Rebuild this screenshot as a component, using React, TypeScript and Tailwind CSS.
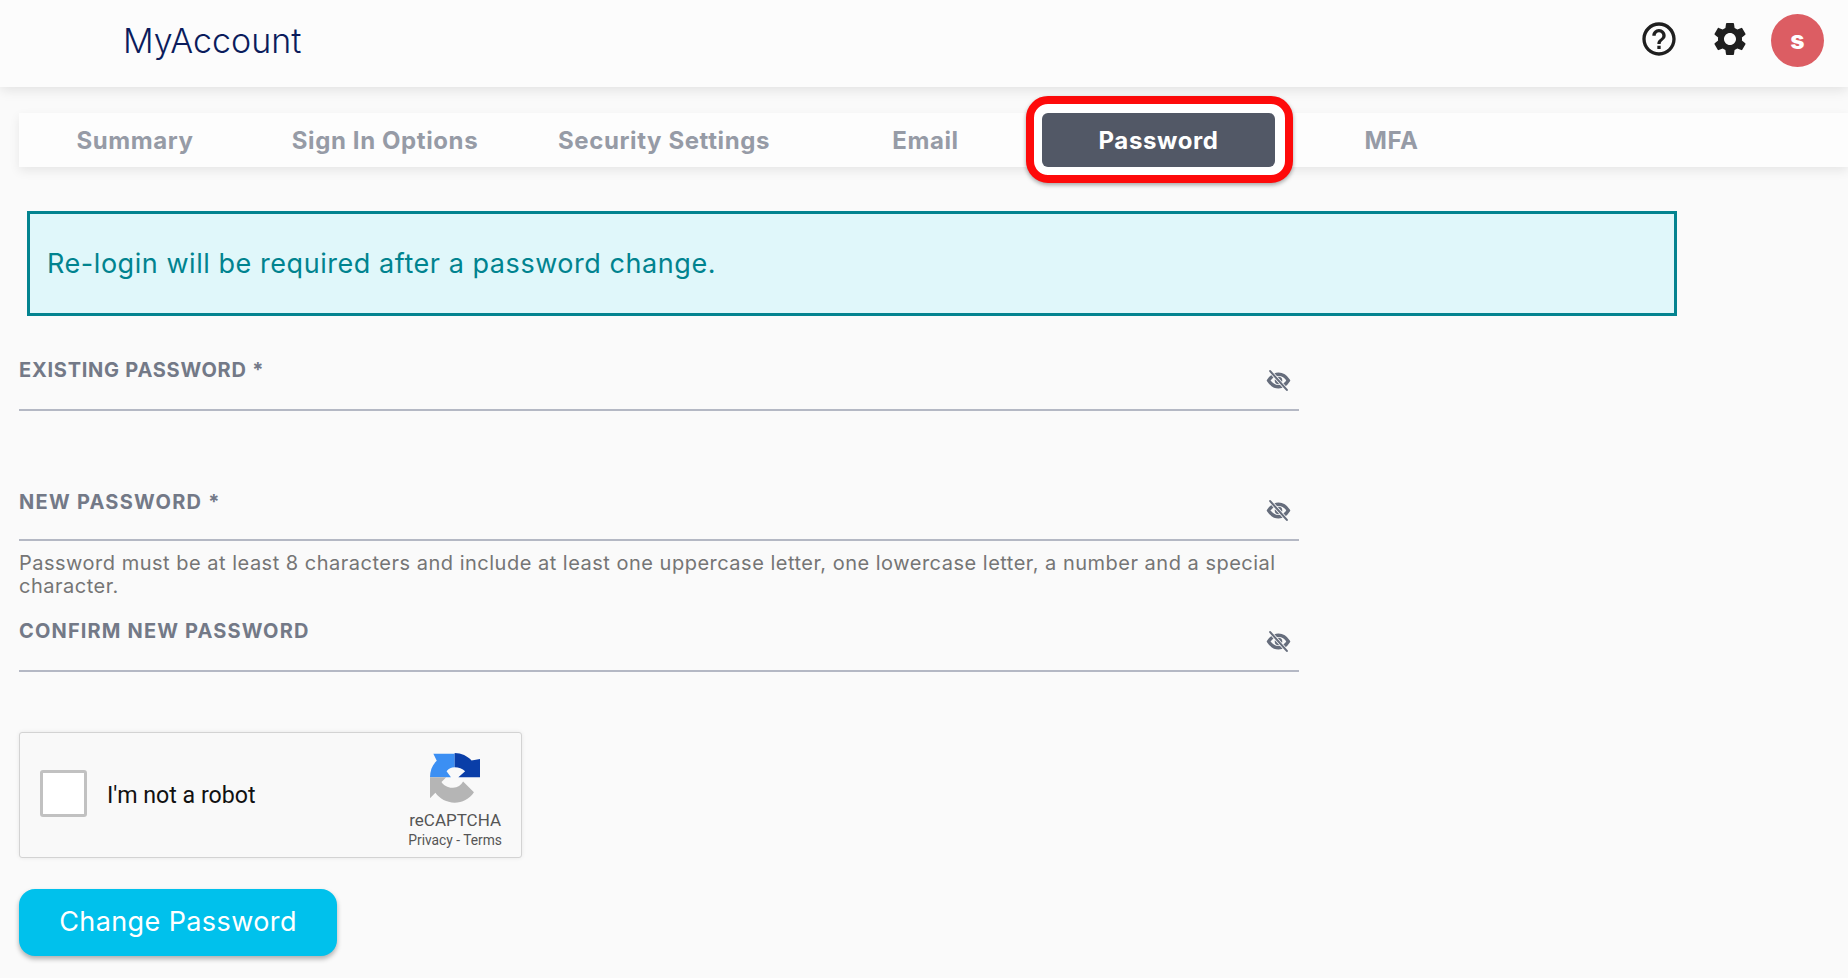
import React from "react";
import { MdHelpOutline, MdSettings } from "react-icons/md";

const tabs = [
  { label: "Summary", width: "w-[232px]" },
  { label: "Sign In Options", width: "w-[268px]" },
  { label: "Security Settings", width: "w-[290px]" },
  { label: "Email", width: "w-[233px]" },
  { label: "Password", width: "w-[233px]", active: true },
  { label: "MFA", width: "w-[233px]" },
];

const RecaptchaLogo: React.FC = () => (
  <svg viewBox="92 8 148 148" className="h-[50px] w-[50px]">
    <path fill="#3b8ff3" d="M165 8V50C155 50 147 54 141 62L154 80H92C92 60 99 43 112 31L102 10H165Z" />
    <path fill="#0a3ea8" d="M165 8C185 8 203 17 215 30L240 26V80H176L196 62C188 54 177 50 165 50Z" />
    <path fill="#b5b5b5" d="M92 80H140L126 94C132 104 146 112 160 111C174 110 184 103 190 92L222 124C209 144 187 155 165 155C141 155 121 144 108 126L92 142Z" />
  </svg>
);

const EyeOffIcon: React.FC = () => (
  <svg viewBox="0 0 24 24" fill="none" className="absolute right-[8px] bottom-[16px] h-[25px] w-[25px] text-[#666d7c]">
    <path stroke="currentColor" strokeWidth={3.2} d="M2.5 12C5 8 8 6 12 6S19 8 21.5 12C19 16 16 18 12 18S5 16 2.5 12Z" />
    <circle cx={12} cy={12} r={3.6} fill="currentColor" />
    <path stroke="#fafafa" strokeWidth={3.6} d="M4 3L20 21" />
    <path stroke="currentColor" strokeWidth={2} strokeLinecap="round" d="M4 3L20 21" />
  </svg>
);

const PasswordField: React.FC<{ label: string; className?: string; labelClass?: string }> = ({
  label,
  className,
  labelClass,
}) => (
  <div className={`relative h-[58px] w-[1280px] border-b-2 border-[#b4b8c4] ${className ?? ""}`}>
    <label className={`block text-[20px] leading-[24px] font-bold text-[#737987] ${labelClass ?? "pt-[5px] tracking-[0.75px]"}`}>
      {label}
    </label>
    <EyeOffIcon />
  </div>
);

const App: React.FC = () => {
  return (
    <div className="h-[978px] overflow-hidden bg-[#fafafa] font-['Inter',sans-serif]">
      <header className="relative z-10 flex h-[87px] items-center bg-[#fcfcfc] pr-[24px] pb-[6px] pl-[123px] shadow-[0_3px_12px_rgba(0,0,0,0.1)]">
        <h1 className="text-[34px] leading-none font-light text-[#0b1c5c]">MyAccount</h1>
        <div className="ml-auto flex items-center">
          <MdHelpOutline className="mb-[3px] h-[40px] w-[40px] text-[#1f1f1f]" />
          <MdSettings className="mb-[3px] ml-[31px] h-[40px] w-[40px] text-[#1f1f1f]" />
          <div className="ml-[21px] flex h-[53px] w-[53px] items-center justify-center rounded-full bg-[#dc5d63] text-[25px] font-extrabold text-white">
            s
          </div>
        </div>
      </header>

      <main className="pl-[19px]">
        <nav className="mt-[26px] flex h-[54px] bg-[#fdfdfd] shadow-[0_4px_10px_rgba(0,0,0,0.08)]">
          {tabs.map((tab) => (
            <div key={tab.label} className={`relative flex items-center justify-center ${tab.width}`}>
              {tab.active && (
                <div className="absolute top-[-17px] right-[-18px] bottom-[-16px] left-[-16px] rounded-[22px] border-[8px] border-[#fe0a0a] bg-white shadow-[0_2px_4px_rgba(0,0,0,0.35)]" />
              )}
              <span
                className={`relative flex h-full w-full items-center justify-center rounded-[6px] pt-[2px] text-[24px] font-bold tracking-[0.6px] ${
                  tab.active ? "bg-[#525866] text-white" : "text-[#969ba6]"
                }`}
              >
                {tab.label}
              </span>
            </div>
          ))}
        </nav>

        <div className="mt-[44px] ml-[8px] flex h-[105px] w-[1650px] items-center border-[3px] border-[#03838f] bg-[#e0f7fa] pt-[2px] pl-[17px] text-[27px] tracking-[0.55px] text-[#00838f]">
          Re-login will be required after a password change.
        </div>

        <PasswordField label="EXISTING PASSWORD *" className="mt-[37px]" />
        <PasswordField label="NEW PASSWORD *" className="mt-[72px]" labelClass="pt-[7px] tracking-[1.25px]" />
        <p className="mt-[11px] w-[1280px] text-[20px] leading-[23px] tracking-[0.5px] text-[#757575]">
          Password must be at least 8 characters and include at least one uppercase letter, one lowercase letter, a number and a special character.
        </p>
        <PasswordField label="CONFIRM NEW PASSWORD" className="mt-[16px]" labelClass="pt-[5px] tracking-[1.15px]" />

        <div className="mt-[60px] flex h-[126px] w-[503px] items-center rounded-[3px] border border-[#d3d3d3] bg-[#f9f9f9] pr-[19px] pl-[20px] font-['Roboto',sans-serif] shadow-[0_0_4px_rgba(0,0,0,0.08)]">
          <div className="mb-[3px] h-[47px] w-[47px] rounded-[3px] border-[3px] border-[#c1c1c1] bg-white" />
          <span className="ml-[20px] text-[23.2px] text-[#111]">I'm not a robot</span>
          <div className="mt-[12px] ml-auto flex flex-col items-center">
            <RecaptchaLogo />
            <span className="mt-[7px] text-[17px] leading-[20px] text-[#555]">reCAPTCHA</span>
            <span className="mt-[1px] text-[13.8px] leading-[18px] text-[#555]">Privacy - Terms</span>
          </div>
        </div>

        <button className="mt-[31px] h-[67px] w-[318px] rounded-[16px] bg-[#00c1ec] text-[27px] tracking-[0.4px] text-white shadow-[0_3px_5px_rgba(0,0,0,0.3)]">
          Change Password
        </button>
      </main>
    </div>
  );
};

export default App;
